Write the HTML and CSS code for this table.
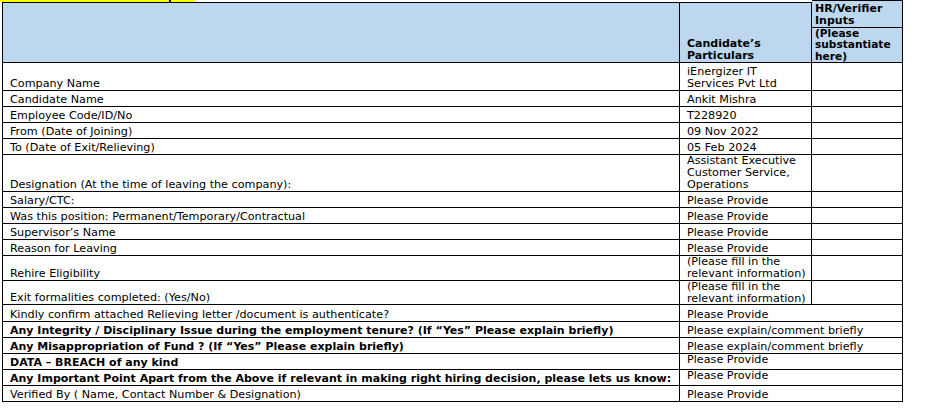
FILE: index.html
```html
<!DOCTYPE html>
<html>
<head>
<meta charset="utf-8">
<link rel="stylesheet" href="styles.css">
</head>
<body>
<div class="strip"><span class="mark"></span></div>
<div class="sheet">
  <div class="c c1 hd"></div>
  <div class="c hd b">Candidate’s<br>Particulars</div>
  <div class="c3hd">
    <div class="c hr1 b">HR/Verifier<br>Inputs</div>
    <div class="c hr2 b">(Please<br>substantiate<br>here)</div>
  </div>

  <div class="c c1">Company Name</div>
  <div class="c">iEnergizer IT<br>Services Pvt Ltd</div>
  <div class="c"></div>

  <div class="c c1">Candidate Name</div>
  <div class="c">Ankit Mishra</div>
  <div class="c"></div>

  <div class="c c1">Employee Code/ID/No</div>
  <div class="c">T228920</div>
  <div class="c"></div>

  <div class="c c1">From (Date of Joining)</div>
  <div class="c">09 Nov 2022</div>
  <div class="c"></div>

  <div class="c c1">To (Date of Exit/Relieving)</div>
  <div class="c">05 Feb 2024</div>
  <div class="c"></div>

  <div class="c c1">Designation (At the time of leaving the company):</div>
  <div class="c">Assistant Executive<br>Customer Service,<br>Operations</div>
  <div class="c"></div>

  <div class="c c1">Salary/CTC:</div>
  <div class="c">Please Provide</div>
  <div class="c"></div>

  <div class="c c1">Was this position: Permanent/Temporary/Contractual</div>
  <div class="c">Please Provide</div>
  <div class="c"></div>

  <div class="c c1">Supervisor’s Name</div>
  <div class="c">Please Provide</div>
  <div class="c"></div>

  <div class="c c1">Reason for Leaving</div>
  <div class="c">Please Provide</div>
  <div class="c"></div>

  <div class="c c1">Rehire Eligibility</div>
  <div class="c">(Please fill in the<br>relevant information)</div>
  <div class="c"></div>

  <div class="c c1">Exit formalities completed: (Yes/No)</div>
  <div class="c tight">(Please fill in the<br>relevant information)</div>
  <div class="c"></div>

  <div class="c c1">Kindly confirm attached Relieving letter /document is authenticate?</div>
  <div class="c span">Please Provide</div>

  <div class="c c1 b">Any Integrity / Disciplinary Issue during the employment tenure? (If “Yes” Please explain briefly)</div>
  <div class="c span">Please explain/comment briefly</div>

  <div class="c c1 b">Any Misappropriation of Fund ? (If “Yes” Please explain briefly)</div>
  <div class="c span">Please explain/comment briefly</div>

  <div class="c c1 b">DATA – BREACH of any kind</div>
  <div class="c span raised">Please Provide</div>

  <div class="c c1 b">Any Important Point Apart from the Above if relevant in making right hiring decision, please lets us know:</div>
  <div class="c span raised">Please Provide</div>

  <div class="c c1">Verified By ( Name, Contact Number &amp; Designation)</div>
  <div class="c span">Please Provide</div>
</div>
</body>
</html>
```

FILE: styles.css
```css
* {
  box-sizing: border-box;
}

body {
  margin: 0;
  background: #ffffff;
  color: #000000;
  font-family: "DejaVu Sans", Verdana, sans-serif;
  font-size: 11.2px;
}

.strip {
  position: absolute;
  left: 0;
  top: 0;
  width: 196px;
  height: 2px;
  background: #ffff00;
}

.mark {
  position: absolute;
  left: 169px;
  top: 0;
  width: 2px;
  height: 2px;
  background: #000000;
}

.sheet {
  display: grid;
  grid-template-columns: 678px 132px 91px;
  grid-template-rows: 63px 28px 16px 16px 16px 16px 37px 16px 16px 16px 16px 25px 24px 17px 16px 16px 16px 16px 16px;
  margin-left: 2px;
  width: 901px;
}

.c {
  display: flex;
  flex-direction: column;
  justify-content: flex-end;
  border-right: 1px solid #000000;
  border-bottom: 1px solid #000000;
  line-height: 12px;
  padding: 0 2px 0 7px;
  white-space: nowrap;
  overflow: hidden;
}

.c1 {
  border-left: 1px solid #000000;
}

.b {
  font-weight: bold;
  font-size: 11px;
}

.hd {
  margin-top: 2px;
  border-top: 1px solid #000000;
  background: #bdd7ee;
}

.c3hd {
  display: flex;
  flex-direction: column;
}

.hr1 {
  height: 28px;
  border-top: 1px solid #000000;
  background: #bdd7ee;
  padding-left: 3px;
  padding-right: 0;
}

.hr2 {
  flex: 1;
  background: #bdd7ee;
  font-size: 10.6px;
  line-height: 11.33px;
  padding-left: 3px;
  padding-right: 0;
}

.tight {
  line-height: 11.5px;
}

.span {
  grid-column: span 2;
}

.raised {
  padding-bottom: 3px;
}
```
